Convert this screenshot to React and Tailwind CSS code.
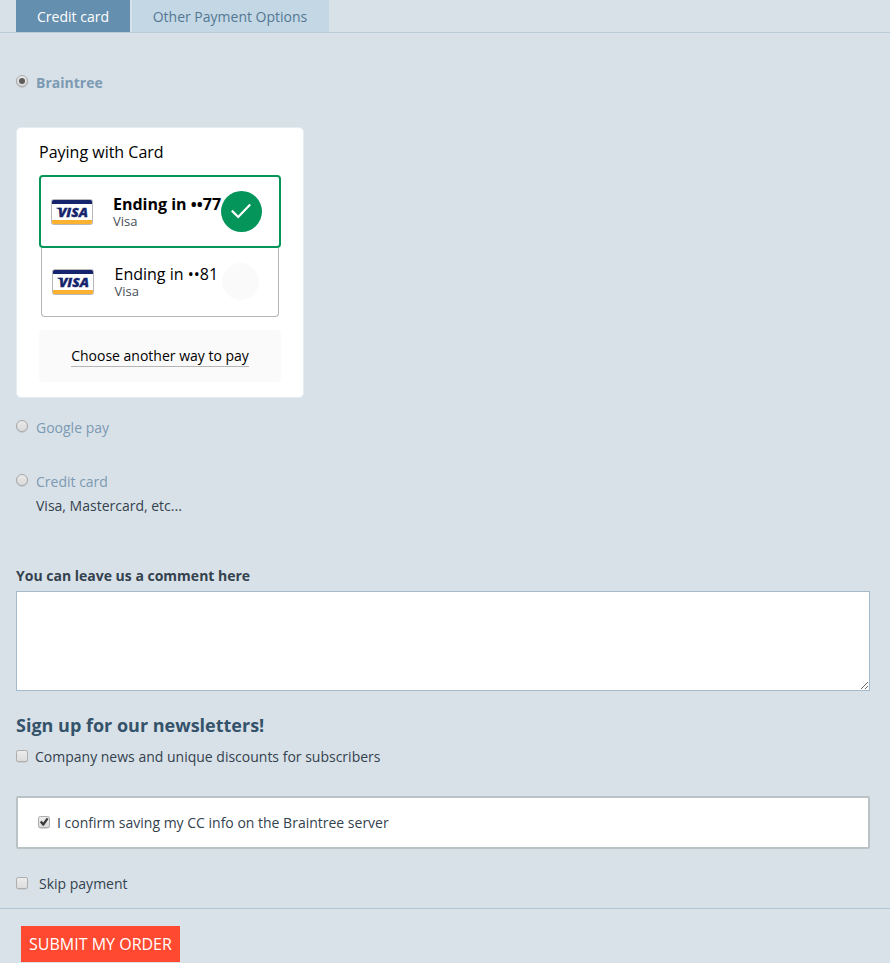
import React from 'react';

function Radio({ checked }) {
  return (
    <svg role="radio" aria-checked={!!checked} className="block size-[14px] shrink-0" viewBox="0 0 14 14">
      <defs>
        <linearGradient id="radioFill" x1="0" y1="0" x2="0" y2="1">
          <stop offset="0" stopColor="#ededed" />
          <stop offset="0.4" stopColor="#e2e2e2" />
          <stop offset="1" stopColor="#dadada" />
        </linearGradient>
      </defs>
      <circle cx="7" cy="7.6" r="5.7" fill="none" stroke="#bcc1c5" strokeWidth="1" />
      <circle cx="7" cy="7" r="5.5" fill="url(#radioFill)" stroke="#a9a9a9" strokeWidth="1" />
      {checked && <circle cx="7" cy="7" r="3" fill="#5c5c5c" />}
    </svg>
  );
}

function Check({ checked }) {
  return (
    <svg role="checkbox" aria-checked={!!checked} className="block size-[14px] shrink-0" viewBox="0 0 14 14">
      <defs>
        <linearGradient id="checkFill" x1="0" y1="0" x2="0" y2="1">
          <stop offset="0" stopColor="#ededed" />
          <stop offset="1" stopColor="#dcdcdc" />
        </linearGradient>
      </defs>
      <rect x="1.5" y="2.1" width="11" height="11" rx="2" fill="none" stroke="#bcc1c5" />
      <rect x="1.5" y="1.5" width="11" height="11" rx="1.8" fill="url(#checkFill)" stroke="#adadad" />
      {checked && <path d="M2.900 7.300L4.600 5.800L6.200 7.500L9.800 2.700L11.500 3.900L6.900 10.800H5.700Z" fill="#3c3c3c" />}
    </svg>
  );
}

function VisaIcon() {
  return (
    <svg className="block h-[26px] w-[42px] shrink-0" viewBox="0 0 42 26">
      <rect x="0.5" y="0.5" width="41" height="25" rx="2" fill="#fff" stroke="#b8b8b8" />
      <path d="M1 5V2.500Q1 1 2.500 1H39.500Q41 1 41 2.500V5Z" fill="#15246c" />
      <path d="M1 21V23.500Q1 25 2.500 25H39.500Q41 25 41 23.500V21Z" fill="#fcb131" />
      <path d="M5.300 8.700H9.500L10.500 13Q8.500 9.700 5.300 9.200Z" fill="#15246c" />
      <text
        x="6.900"
        y="18"
        textLength="30"
        lengthAdjust="spacingAndGlyphs"
        fill="#15246c"
        stroke="#15246c"
        strokeWidth="0.350"
        className="font-['Open_Sans',sans-serif] text-[13px] font-extrabold italic"
      >
        VISA
      </text>
    </svg>
  );
}

export default function App() {
  return (
    <div className="h-[963px] w-full overflow-hidden bg-[#d9e1e8] font-['Open_Sans',sans-serif] text-sm leading-5 text-[#33424e]">
      <nav className="flex h-[33px] gap-[2px] border-b border-[#b9ccd8] pl-4">
        <div className="flex h-8 w-[114px] items-center justify-center bg-[#648fae] pt-px text-white">Credit card</div>
        <div className="flex h-8 w-[197px] items-center justify-center bg-[#c4d7e4] pt-px pr-px text-[#537794]">Other Payment Options</div>
      </nav>

      <div className="px-[15px]">
        <div className="mt-10 flex h-5 gap-[7px] font-bold text-[#7b9ab3]">
          <div className="mt-px"><Radio checked /></div>
          <span>Braintree</span>
        </div>

        <section className="mt-[34px] ml-px h-[271px] w-[288px] rounded-[5px] border border-[#e6edf1] bg-white px-[22px] pt-3 text-black">
          <h2 className="h-[35px] text-base leading-6">Paying with Card</h2>
          <div className="flex h-[73px] rounded-[4px] border-2 border-[#04955a] pl-[10px]">
            <div className="mt-[22px]"><VisaIcon /></div>
            <div className="mt-[18px] ml-5 w-[108px] whitespace-nowrap">
              <div className="text-base leading-[18px] font-bold">Ending in ••77</div>
              <div className="text-[13px] leading-4 text-[#454f58]">Visa</div>
            </div>
            <div className="mt-[14px] flex size-[41px] shrink-0 items-center justify-center rounded-full bg-[#04955a]">
              <svg className="size-[41px]" viewBox="0 0 41 41" fill="none" stroke="#fff" strokeWidth="2.2">
                <path d="M10.800 19.600L17.200 26L29.200 13.600" />
              </svg>
            </div>
          </div>
          <div className="mx-[2px] flex h-[69px] rounded-b-[4px] border border-t-0 border-[#b5b5b5] pl-[10px]">
            <div className="mt-[21px]"><VisaIcon /></div>
            <div className="mt-[17px] ml-[20.5px] w-[107.5px] whitespace-nowrap">
              <div className="text-base leading-[18px]">Ending in ••81</div>
              <div className="text-[13px] leading-4 text-[#454f58]">Visa</div>
            </div>
            <div className="mt-[15px] size-[37px] shrink-0 rounded-full bg-[#fafafa]" />
          </div>
          <div className="mt-[13px] flex h-[52px] justify-center rounded-[4px] bg-[#fafafa] pt-4">
            <span className="h-[21px] border-b border-[#b5b5b5]">Choose another way to pay</span>
          </div>
        </section>

        <div className="mt-5 flex h-5 gap-[7px] text-[#7b9ab3]">
          <div className="mt-px"><Radio /></div>
          <span>Google pay</span>
        </div>
        <div className="mt-[34px] flex h-5 gap-[7px] text-[#7b9ab3]">
          <div className="mt-px"><Radio /></div>
          <span>Credit card</span>
        </div>
        <p className="mt-1 pl-[21px]">Visa, Mastercard, etc...</p>
      </div>

      <div className="pr-5 pl-4">
        <label className="mt-[50px] block font-bold">You can leave us a comment here</label>
        <textarea className="mt-[5px] block h-[100px] w-full resize border border-[#a5bacb] bg-white outline-none" />
        <h3 className="mt-[22px] text-lg leading-[25px] font-bold text-[#34536b]">Sign up for our newsletters!</h3>
        <div className="mt-[9px] -ml-px flex h-5 gap-[6px]">
          <div className="mt-[2px]"><Check /></div>
          <span>Company news and unique discounts for subscribers</span>
        </div>
        <div className="mt-[29px] flex h-[53px] gap-[6px] rounded-[2px] border-2 border-[#b9c2c4] bg-white pt-[15px] pl-[19px]">
          <div className="mt-[2px]"><Check checked /></div>
          <span>I confirm saving my CC info on the Braintree server</span>
        </div>
        <div className="mt-[25px] -ml-px flex h-5 gap-[10px]">
          <div className="mt-[2px]"><Check /></div>
          <span>Skip payment</span>
        </div>
      </div>

      <footer className="mt-[14px] h-[55px] border-t border-[#b3c6d3] bg-[#d9e2e9] pt-[17px] pl-[21px]">
        <button className="flex h-9 w-[159px] items-center justify-center bg-[#ff4930] text-base whitespace-nowrap text-white">SUBMIT MY ORDER</button>
      </footer>
    </div>
  );
}
